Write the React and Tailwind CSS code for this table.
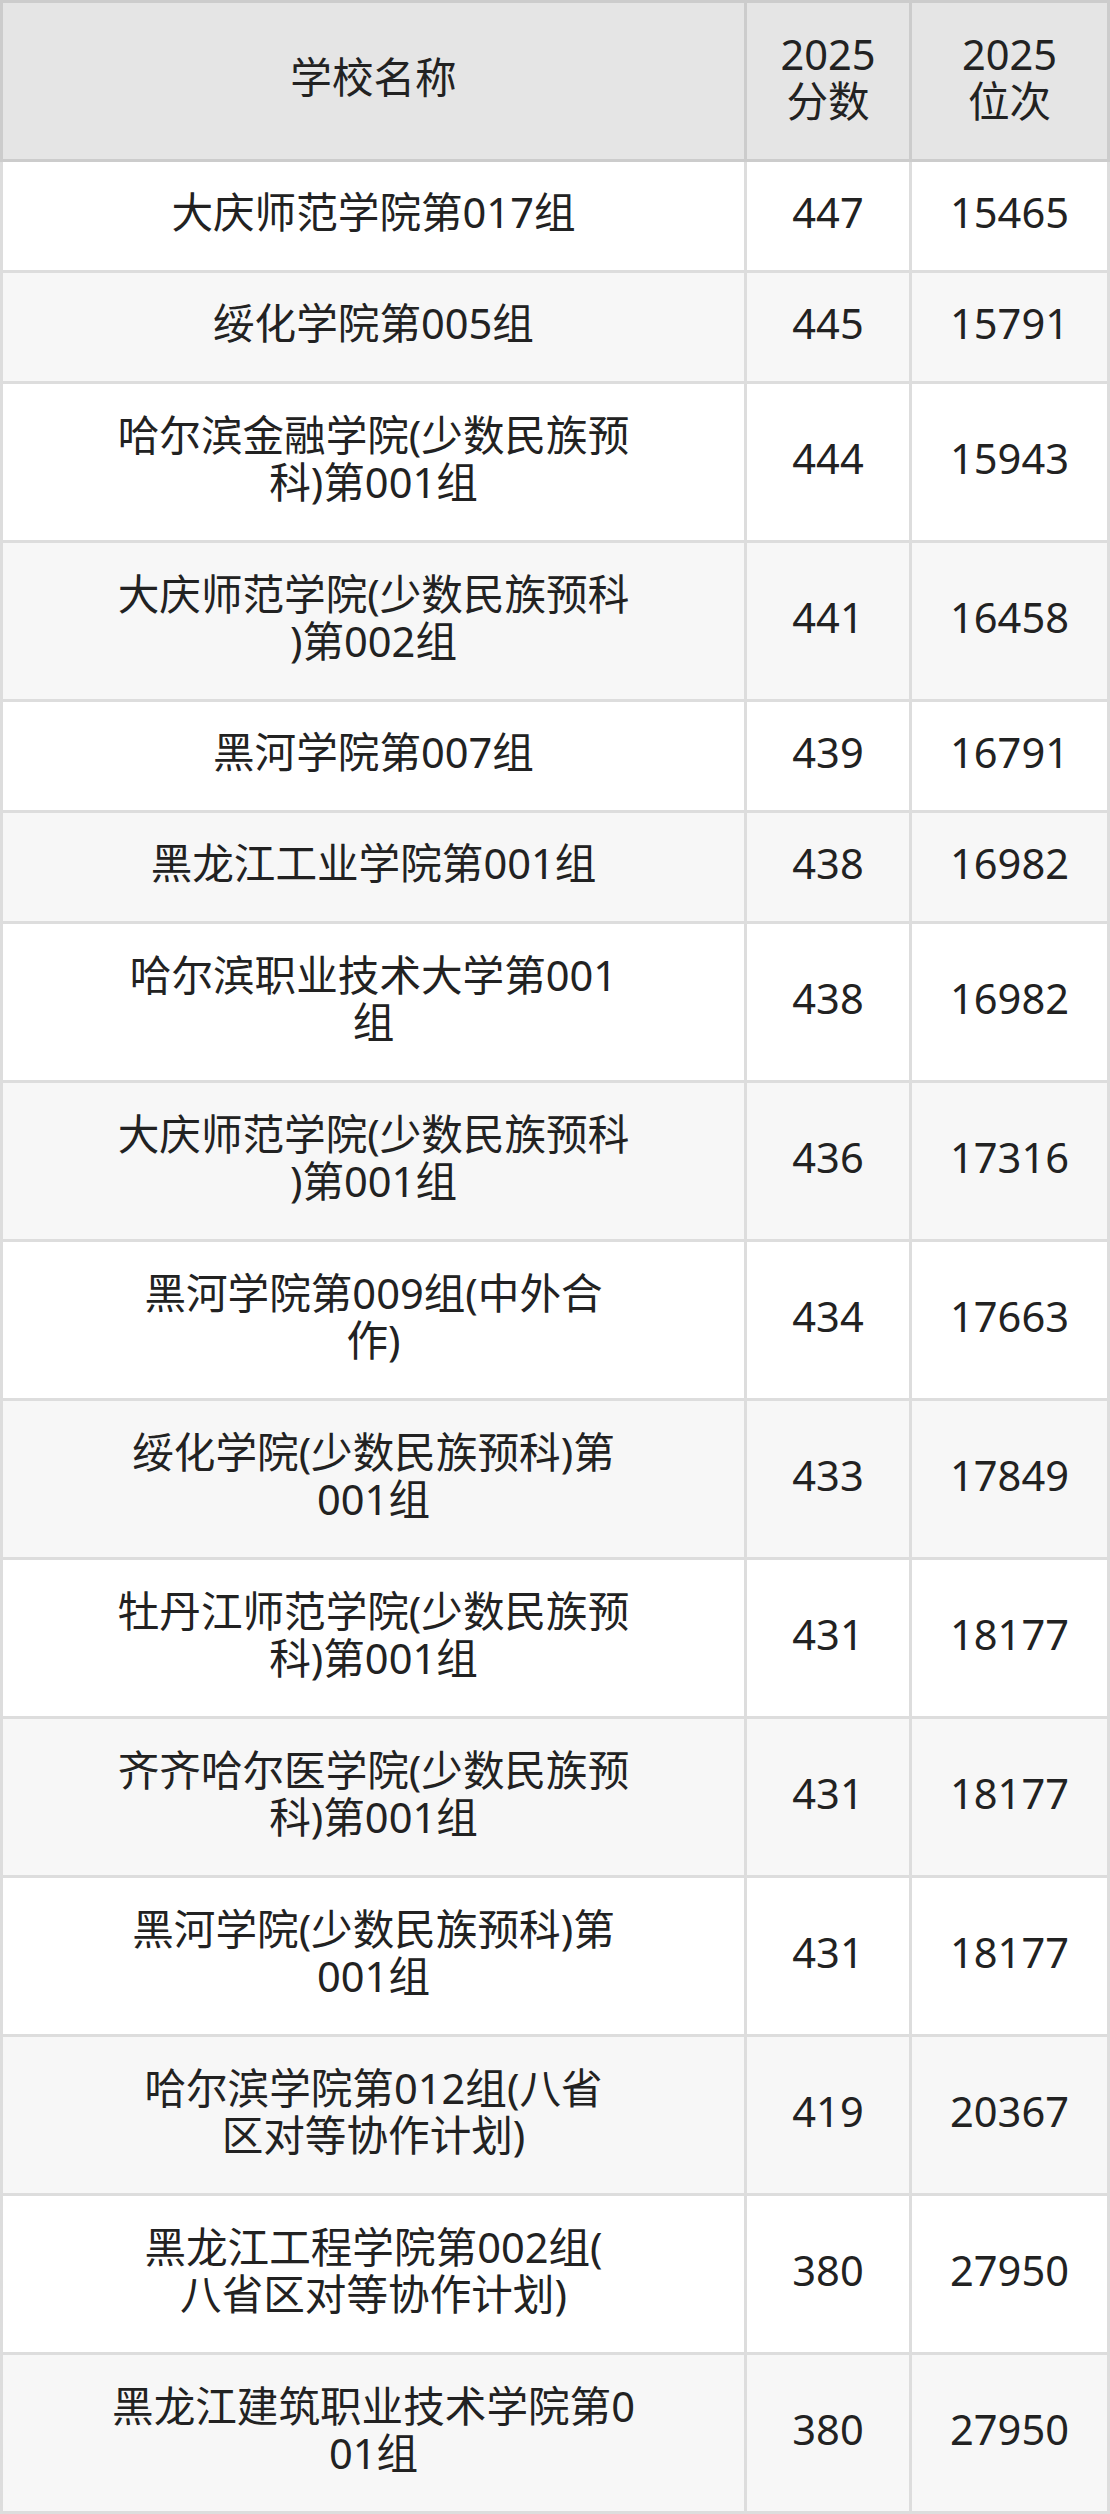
import React from "react";

const rows = [
  [["大庆师范学院第017组"], "447", "15465"],
  [["绥化学院第005组"], "445", "15791"],
  [["哈尔滨金融学院(少数民族预", "科)第001组"], "444", "15943"],
  [["大庆师范学院(少数民族预科", ")第002组"], "441", "16458"],
  [["黑河学院第007组"], "439", "16791"],
  [["黑龙江工业学院第001组"], "438", "16982"],
  [["哈尔滨职业技术大学第001", "组"], "438", "16982"],
  [["大庆师范学院(少数民族预科", ")第001组"], "436", "17316"],
  [["黑河学院第009组(中外合", "作)"], "434", "17663"],
  [["绥化学院(少数民族预科)第", "001组"], "433", "17849"],
  [["牡丹江师范学院(少数民族预", "科)第001组"], "431", "18177"],
  [["齐齐哈尔医学院(少数民族预", "科)第001组"], "431", "18177"],
  [["黑河学院(少数民族预科)第", "001组"], "431", "18177"],
  [["哈尔滨学院第012组(八省", "区对等协作计划)"], "419", "20367"],
  [["黑龙江工程学院第002组(", "八省区对等协作计划)"], "380", "27950"],
  [["黑龙江建筑职业技术学院第0", "01组"], "380", "27950"],
];

const Lines = ({ lines }) => (
  <div className="flex flex-col items-center">
    {lines.map((l, i) => (
      <span key={i} className="whitespace-nowrap">
        {l}
      </span>
    ))}
  </div>
);

const App = () => {
  return (
    <div
      className="w-[1110px] bg-white text-[#222] text-[41.6px] leading-[47px]"
      style={{ fontFamily: '"Noto Sans", "Noto Sans CJK SC", sans-serif' }}
    >
      {/* header */}
      <div className="flex h-[162px] bg-[#e5e5e5] border-y-[3px] border-[#cccccc]">
        <div className="w-[747px] flex items-center justify-center pb-[7px] border-x-[3px] border-[#cccccc]">
          学校名称
        </div>
        <div className="w-[165px] flex items-center justify-center pb-[7px] border-r-[3px] border-[#cccccc]">
          <Lines lines={["2025", "分数"]} />
        </div>
        <div className="w-[198px] flex items-center justify-center pb-[7px] border-r-[3px] border-[#cccccc]">
          <Lines lines={["2025", "位次"]} />
        </div>
      </div>

      {rows.map(([name, score, rank], i) => (
        <div
          key={i}
          className={`flex border-b-[3px] border-[#dddddd] ${
            name.length > 1 ? "h-[159px]" : "h-[111px]"
          } ${i % 2 === 1 ? "bg-[#f7f7f7]" : "bg-white"}`}
        >
          <div className="w-[747px] flex items-center justify-center pb-[7px] border-x-[3px] border-[#dddddd]">
            <Lines lines={name} />
          </div>
          <div className="w-[165px] flex items-center justify-center pb-[7px] border-r-[3px] border-[#dddddd]">
            {score}
          </div>
          <div className="w-[198px] flex items-center justify-center pb-[7px] border-r-[3px] border-[#dddddd]">
            {rank}
          </div>
        </div>
      ))}
    </div>
  );
};

export default App;
